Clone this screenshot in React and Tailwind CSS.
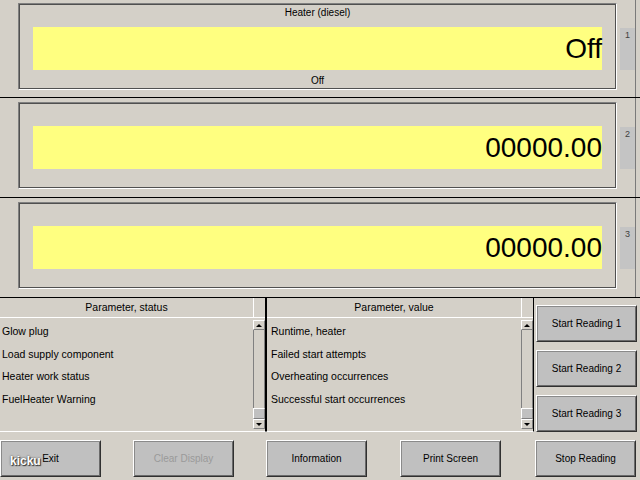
import React from "react";

const panels = [
  { n: 1, title: "Heater (diesel)", value: "Off", foot: "Off" },
  { n: 2, title: "", value: "00000.00", foot: "" },
  { n: 3, title: "", value: "00000.00", foot: "" },
];

const statusRows = ["Glow plug", "Load supply component", "Heater work status", "FuelHeater Warning"];
const valueRows = ["Runtime, heater", "Failed start attempts", "Overheating occurrences", "Successful start occurrences"];

function Panel({ n, title, value, foot, first }) {
  return (
    <div className={`flex items-start border-b border-black ${first ? "h-[98px]" : "h-[100px]"}`}>
      <div className="w-[18px] shrink-0" />
      <div
        className={`w-[599px] h-[87px] shrink-0 border border-t-[#808080] border-l-[#808080] border-b-white border-r-white ${
          first ? "mt-[3px]" : "mt-[4px]"
        }`}
      >
        <div className="h-full border border-[#505050] flex flex-col px-[13px]">
          <div className="h-[22px] pt-[2px] text-[10px] leading-[12px] text-center text-black">{title}</div>
          <div className="h-[43px] bg-[#ffff80] flex items-center justify-end">
            <span className="text-[28px] leading-none text-black">{value}</span>
          </div>
          <div className="pt-[5px] text-[10px] leading-[12px] text-center text-black">{foot}</div>
        </div>
      </div>
      <div
        className={`w-[15px] h-[42px] ml-[3px] bg-[#c4c4c4] text-[9px] leading-[10px] text-center text-[#404040] pt-[2px] shrink-0 ${
          first ? "mt-[28px]" : "mt-[29px]"
        }`}
      >
        {n}
      </div>
      <div className="w-px self-stretch bg-[#7a7a7a] shrink-0" />
    </div>
  );
}

function Scrollbar() {
  return (
    <div className="w-[12px] flex flex-col shrink-0">
      <div className="h-[20px] border-l border-b border-white shrink-0" />
      <div className="mt-[2px] h-[10px] border border-t-white border-l-white border-b-[#808080] border-r-[#808080] flex items-center justify-center shrink-0">
        <div className="w-0 h-0 border-l-[3px] border-r-[3px] border-b-[3px] border-l-transparent border-r-transparent border-b-black" />
      </div>
      <div className="flex-1 border-x border-[#808080] bg-[#d4d0c8]" />
      <div className="h-[11px] bg-[#c0c0c0] border border-t-white border-l-white border-b-[#808080] border-r-[#808080] shrink-0" />
      <div className="h-[10px] border border-t-white border-l-white border-b-[#808080] border-r-[#808080] flex items-center justify-center shrink-0">
        <div className="w-0 h-0 border-l-[3px] border-r-[3px] border-t-[3px] border-l-transparent border-r-transparent border-t-black" />
      </div>
      <div className="h-[2px] shrink-0" />
    </div>
  );
}

function Table({ title, rows, className, pad }) {
  return (
    <div className={`flex border-b border-white ${className}`}>
      <div className="flex-1 flex flex-col">
        <div className="h-[20px] border-b border-white flex items-center justify-center text-[10.5px] text-black">
          {title}
        </div>
        <div className="flex-1 pt-[2px]">
          {rows.map((r) => (
            <div key={r} className={`h-[22.5px] leading-[22.5px] text-[10.5px] text-black ${pad}`}>
              {r}
            </div>
          ))}
        </div>
      </div>
      <Scrollbar />
    </div>
  );
}

function Btn({ children, className = "", disabled }) {
  return (
    <div
      className={`h-[37px] w-[101px] shrink-0 bg-[#c0c0c0] border border-t-white border-l-white border-b-[#303030] border-r-[#303030] shadow-[inset_1px_1px_0_#8a8a8a,inset_-1px_-1px_0_#6a6a6a] flex items-center justify-center text-[10px] ${
        disabled ? "text-[#9a9a9a]" : "text-black"
      } ${className}`}
    >
      {children}
    </div>
  );
}

export default function App() {
  return (
    <div className="relative w-[640px] h-[480px] overflow-hidden bg-[#d4d0c8] font-['Liberation_Sans',Arial,sans-serif]">
      {panels.map((p, i) => (
        <Panel key={p.n} {...p} first={i === 0} />
      ))}

      <div className="flex h-[134px]">
        <Table title="Parameter, status" rows={statusRows} className="w-[266px] border-r border-r-black" pad="pl-[2px]" />
        <Table
          title="Parameter, value"
          rows={valueRows}
          className="w-[268px] border-l border-l-black border-r border-r-black"
          pad="pl-[4px]"
        />
        <div className="ml-[2px] pt-[7px] flex flex-col gap-[8px]">
          <Btn>Start Reading 1</Btn>
          <Btn>Start Reading 2</Btn>
          <Btn>Start Reading 3</Btn>
        </div>
      </div>

      <div className="flex mt-[8px]">
        <Btn>Exit</Btn>
        <Btn className="ml-[32px]" disabled>
          Clear Display
        </Btn>
        <Btn className="ml-[32px]">Information</Btn>
        <Btn className="ml-[33px]">Print Screen</Btn>
        <Btn className="ml-[34px]">Stop Reading</Btn>
      </div>

      <div className="absolute left-[10px] top-[452px] text-[12px] font-bold text-white [text-shadow:0_0_2px_#333,1px_1px_1px_#333]">
        kicku
      </div>
    </div>
  );
}
